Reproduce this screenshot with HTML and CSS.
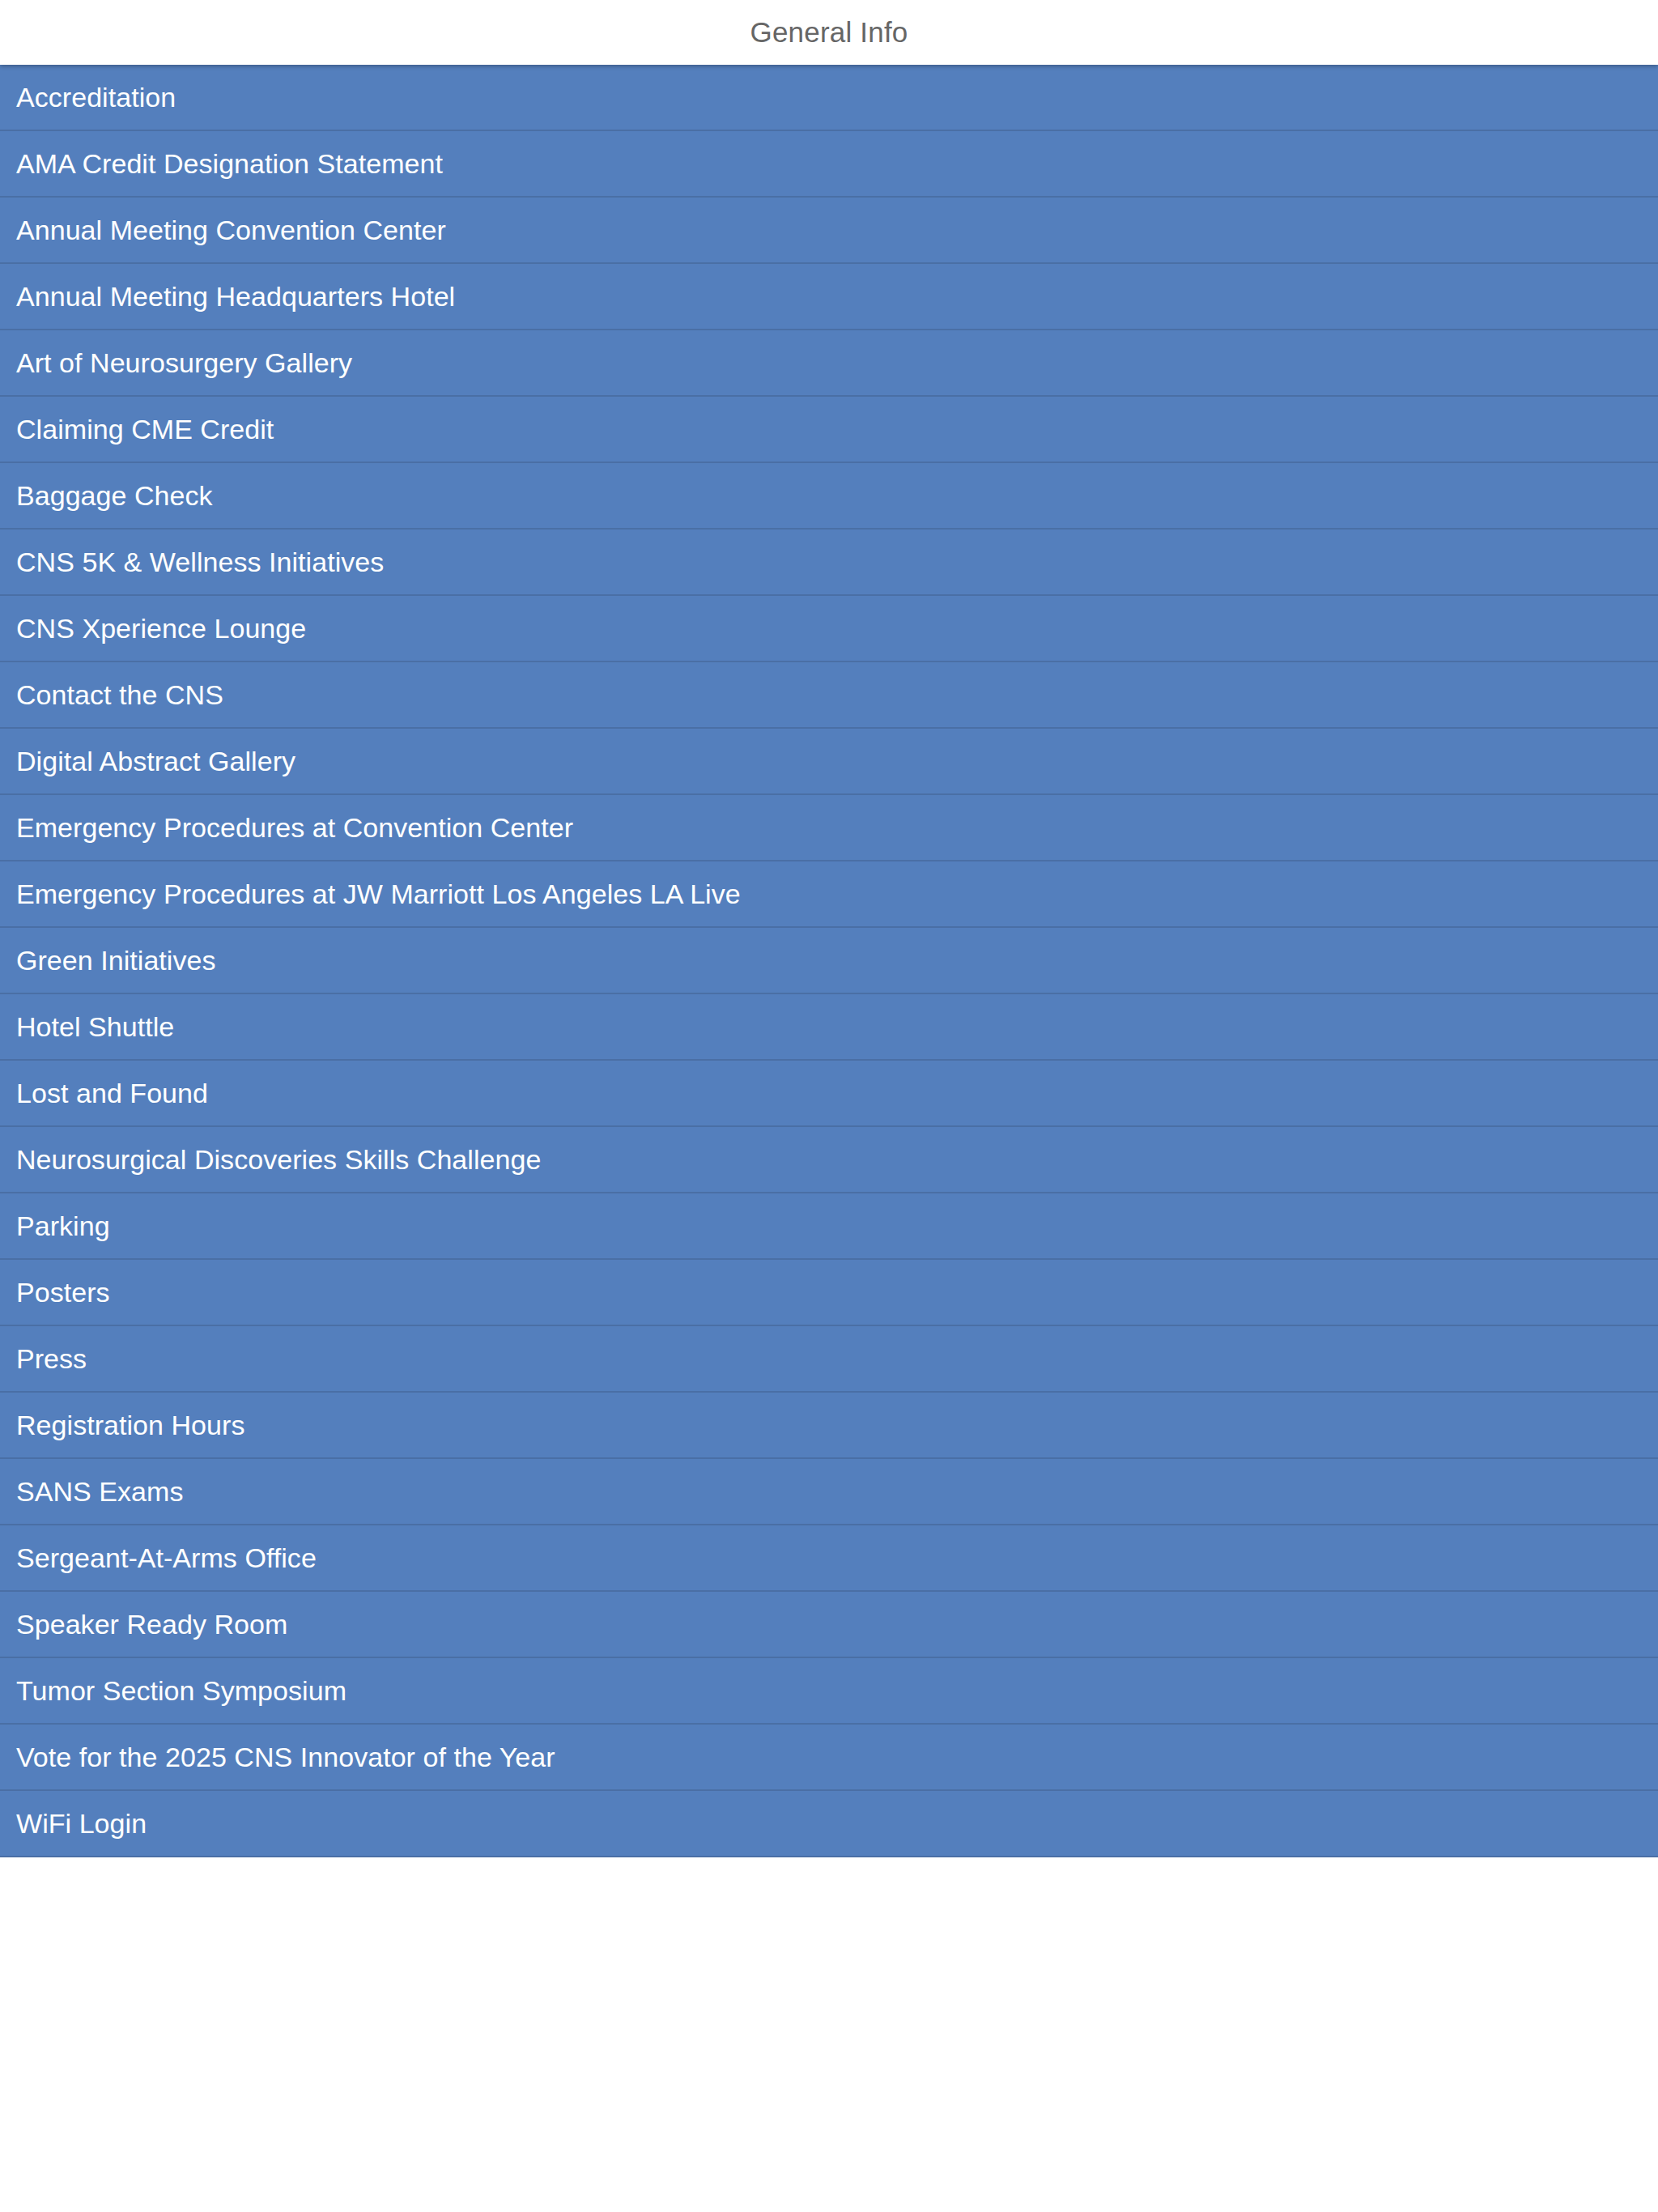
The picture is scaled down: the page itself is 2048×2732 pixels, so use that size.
FILE: index.html
```html
<!DOCTYPE html>
<html>
<head>
<meta charset="utf-8">
<link rel="stylesheet" href="styles.css">
</head>
<body>
<header class="topbar"><span class="title">General Info</span></header>
<ul class="list">
<li class="item">Accreditation</li>
<li class="item">AMA Credit Designation Statement</li>
<li class="item">Annual Meeting Convention Center</li>
<li class="item">Annual Meeting Headquarters Hotel</li>
<li class="item">Art of Neurosurgery Gallery</li>
<li class="item">Claiming CME Credit</li>
<li class="item">Baggage Check</li>
<li class="item">CNS 5K &amp; Wellness Initiatives</li>
<li class="item">CNS Xperience Lounge</li>
<li class="item">Contact the CNS</li>
<li class="item">Digital Abstract Gallery</li>
<li class="item">Emergency Procedures at Convention Center</li>
<li class="item">Emergency Procedures at JW Marriott Los Angeles LA Live</li>
<li class="item">Green Initiatives</li>
<li class="item">Hotel Shuttle</li>
<li class="item">Lost and Found</li>
<li class="item">Neurosurgical Discoveries Skills Challenge</li>
<li class="item">Parking</li>
<li class="item">Posters</li>
<li class="item">Press</li>
<li class="item">Registration Hours</li>
<li class="item">SANS Exams</li>
<li class="item">Sergeant-At-Arms Office</li>
<li class="item">Speaker Ready Room</li>
<li class="item">Tumor Section Symposium</li>
<li class="item">Vote for the 2025 CNS Innovator of the Year</li>
<li class="item">WiFi Login</li>
</ul>
</body>
</html>
```
FILE: styles.css
```css
html, body {
  margin: 0;
  padding: 0;
  background: #ffffff;
  font-family: "Liberation Sans", Arial, sans-serif;
}
.topbar {
  height: 80px;
  display: flex;
  align-items: center;
  justify-content: center;
  background: #ffffff;
  position: relative;
  z-index: 2;
  box-shadow: 0 2px 5px rgba(0, 0, 0, 0.28);
}
.title {
  font-size: 35px;
  color: #666666;
  letter-spacing: 0.2px;
}
.list {
  list-style: none;
  margin: 0;
  padding: 0;
}
.item {
  height: 80px;
  display: flex;
  align-items: center;
  padding-left: 20px;
  background: #547fbd;
  border-bottom: 2px solid #4a6fa5;
  color: #ffffff;
  font-size: 34px;
  letter-spacing: 0.05px;
}
```
